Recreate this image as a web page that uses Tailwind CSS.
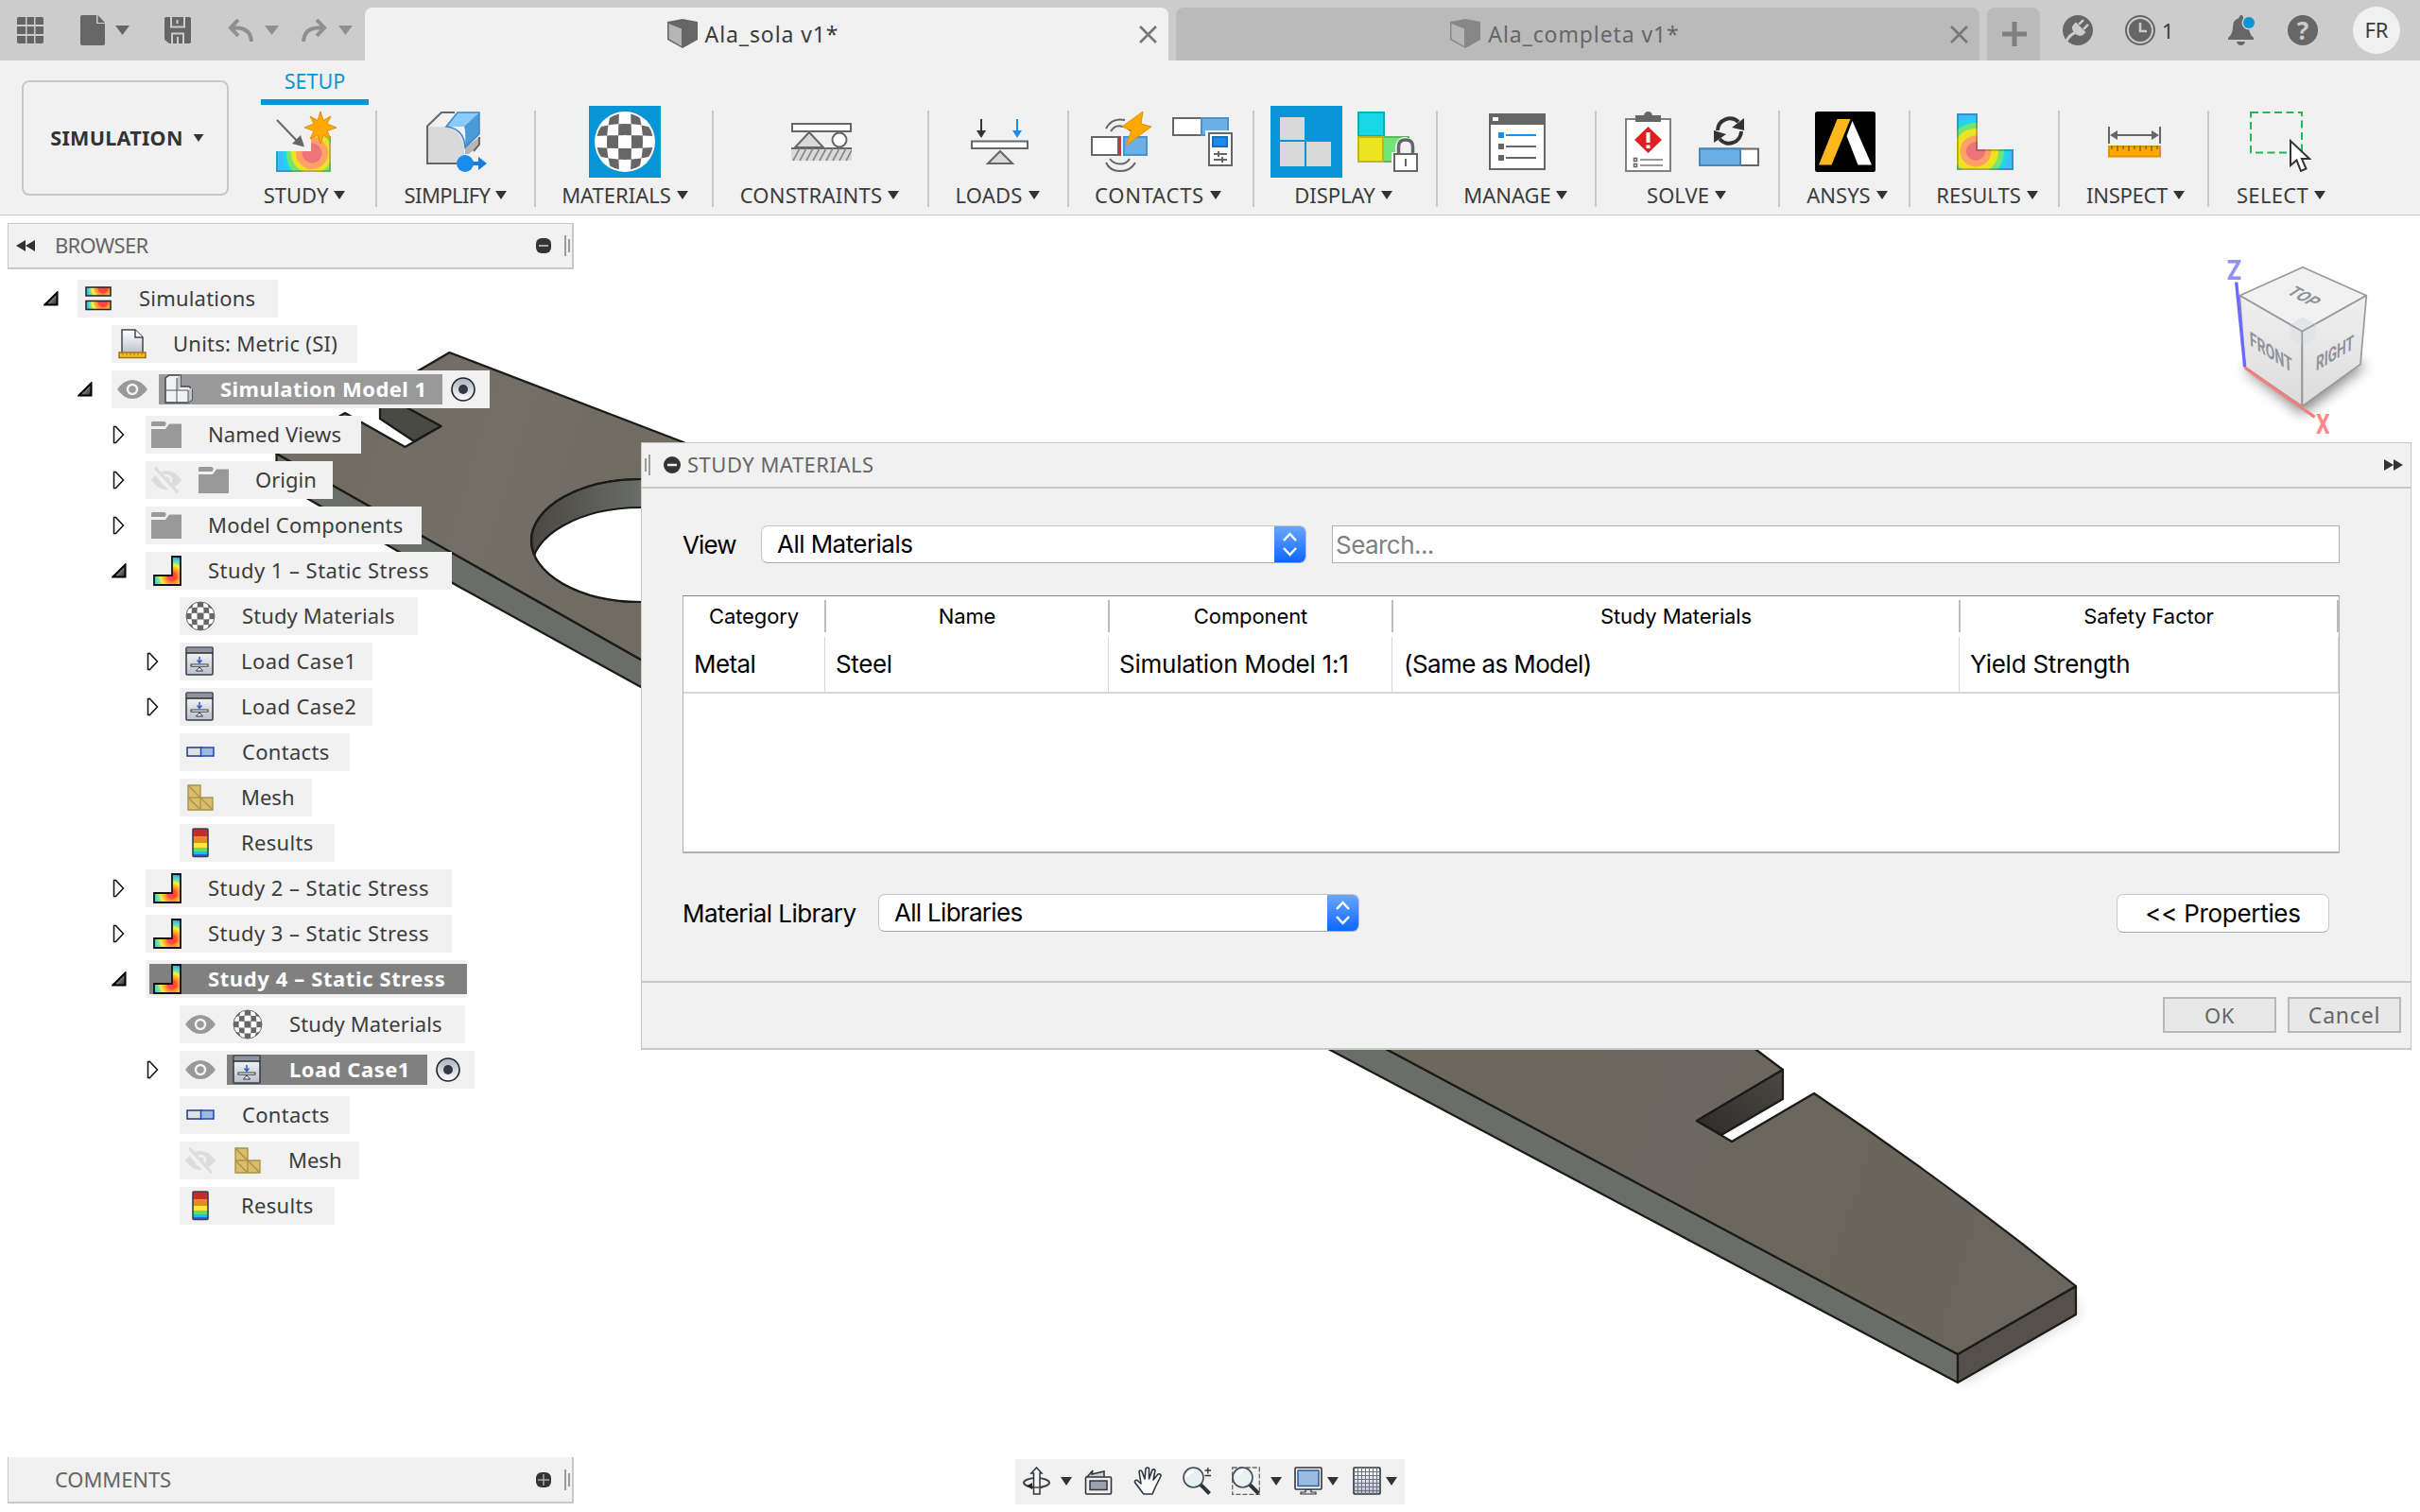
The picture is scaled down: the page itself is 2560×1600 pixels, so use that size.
<!DOCTYPE html>
<html lang="en">
<head>
<meta charset="utf-8">
<title>Ala_sola v1* - Simulation</title>
<script src="https://cdn.jsdelivr.net/npm/@tailwindcss/browser@4"></script>
</head>
<body class="w-[2560px] h-[1600px] overflow-hidden flex flex-col bg-white text-[22px] text-[#3c3c3c] leading-none whitespace-nowrap font-['Noto_Sans','Open_Sans',sans-serif]">

<!-- shared symbols -->
<svg class="absolute w-0 h-0">
  <defs>
    <linearGradient id="gTri" x1="1" y1="1" x2="0.2" y2="0.3"><stop offset="0" stop-color="#222"/><stop offset="1" stop-color="#bbb"/></linearGradient>
    <linearGradient id="gDoc" x1="0" y1="0" x2="0" y2="1"><stop offset="0" stop-color="#fff"/><stop offset="1" stop-color="#b9bfcc"/></linearGradient>
    <linearGradient id="gRad" x1="0" y1="0" x2="0" y2="1"><stop offset="0" stop-color="#a9b1c0"/><stop offset="1" stop-color="#fff"/></linearGradient>
    <linearGradient id="gB" x1="0" y1="0" x2="0" y2="1"><stop offset="0" stop-color="#6aa8fb"/><stop offset="1" stop-color="#0a66ff"/></linearGradient>
    <radialGradient id="gHeat" gradientUnits="userSpaceOnUse" cx="20" cy="22" r="23">
      <stop offset="0.2" stop-color="#ff4a3d"/><stop offset="0.28" stop-color="#ff8a2e"/><stop offset="0.42" stop-color="#ffc02e"/><stop offset="0.52" stop-color="#ffe94a"/><stop offset="0.65" stop-color="#7fe87a"/><stop offset="0.8" stop-color="#3fc8f5"/><stop offset="1" stop-color="#3a6fe0"/>
    </radialGradient>
    <radialGradient id="gHeatS" gradientUnits="userSpaceOnUse" cx="19" cy="2" r="20">
      <stop offset="0.25" stop-color="#ff4444"/><stop offset="0.3" stop-color="#ff8a2e"/><stop offset="0.45" stop-color="#ffb02e"/><stop offset="0.5" stop-color="#ffe94a"/><stop offset="0.6" stop-color="#ffe94a"/><stop offset="0.68" stop-color="#7fe87a"/><stop offset="0.8" stop-color="#3fc8f5"/><stop offset="1" stop-color="#3a8fe0"/>
    </radialGradient>
    <clipPath id="cBall"><circle r="30"/></clipPath>
  </defs>
  <symbol id="caret" viewBox="0 0 12 9"><path d="M0 0H12L6 9z" fill="#333"/></symbol>
  <symbol id="open" viewBox="0 0 16 16"><path d="M1.500 14.500H14.500V1.500z" fill="url(#gTri)" stroke="#000" stroke-width="2"/></symbol>
  <symbol id="closed" viewBox="0 0 16 20"><path d="M2.500 1.500H4.500L12.500 10L4.500 18.500H2.500z" fill="#fff" stroke="#111" stroke-width="1.500"/></symbol>
  <symbol id="eye" viewBox="0 0 32 22"><path d="M0 11Q7 1 16 1T32 11Q25 21 16 21T0 11z" fill="#999"/><circle cx="16" cy="11" r="5" fill="none" stroke="#f1f1f1" stroke-width="2.500"/></symbol>
  <symbol id="eyeoff" viewBox="0 0 32 28"><path d="M0 14Q7 4 16 4T32 14Q25 24 16 24T0 14z" fill="#dcdcdc"/><circle cx="16" cy="14" r="5" fill="none" stroke="#f1f1f1" stroke-width="2.500"/><path d="M1 0L26 28" stroke="#f1f1f1" stroke-width="7"/><path d="M4 1L28 27" stroke="#dcdcdc" stroke-width="3"/></symbol>
  <symbol id="folder" viewBox="0 0 32 28"><path d="M0 1.500Q0 0 1.500 0H14L16 2L14.500 5H0z" fill="#999"/><path d="M0 8H15L19 2.500H32V28H0z" fill="#999"/></symbol>
  <symbol id="study" viewBox="0 0 30 32"><path d="M1 21H20V1H29V31H1z" fill="url(#gHeat)" stroke="#111" stroke-width="1.800"/></symbol>
  <symbol id="ball" viewBox="-32 -32 64 64"><circle r="31" fill="#fff"/><path clip-path="url(#cBall)" fill="#666" fill-rule="evenodd" d="M-32 -32H32V32H-32z M-14 -32Q-24 0 -14 32H14Q24 0 14 -32z M-6 -32Q-8 0 -6 32H6Q8 0 6 -32z M-32 -14Q0 -24 32 -14V14Q0 24 -32 14z M-32 -6Q0 -8 32 -6V6Q0 8 -32 6z"/><circle r="30" fill="none" stroke="#666" stroke-width="2"/></symbol>
  <symbol id="load" viewBox="0 0 30 32"><rect x="1" y="1" width="28" height="29" rx="1" fill="url(#gDoc)" stroke="#3a3f48" stroke-width="1.600"/><rect x="2" y="2" width="26" height="4.500" fill="#8d95a3"/><path d="M1 7H29" stroke="#222" stroke-width="1.500"/><path d="M15 11V17M12.500 14.500L15 17.500L17.500 14.500" fill="none" stroke="#2f62c9" stroke-width="1.500"/><rect x="6" y="19" width="18" height="2.200" fill="#fff" stroke="#333"/><path d="M15 22L18.500 26H11.500z" fill="#fff" stroke="#333"/></symbol>
  <symbol id="contact" viewBox="0 0 30 12"><rect x="1" y="1" width="15" height="9" fill="#dfe1e6" stroke="#1d3a7a" stroke-width="1.500"/><rect x="15.500" y="1" width="13.500" height="9" fill="#9db9e2" stroke="#1f4bb5" stroke-width="1.500"/></symbol>
  <symbol id="mesh" viewBox="0 0 28 28"><path d="M1 1H14V14H27V27H1zM1 14H14V27M1 1L14 14L27 27M1 14L14 27" fill="#d9be6c" stroke="#ab924a" stroke-width="1.400"/></symbol>
  <symbol id="result" viewBox="0 0 18 32"><rect x="1" y="1" width="16" height="8.500" fill="#c82a2a"/><rect x="1" y="9.500" width="16" height="6.500" fill="#e58a20"/><rect x="1" y="16" width="16" height="5" fill="#ffe83a"/><rect x="1" y="21" width="16" height="4" fill="#5ee25e"/><rect x="1" y="25" width="16" height="3" fill="#00c8ff"/><rect x="1" y="28" width="16" height="2.500" fill="#2c62d0"/><rect x="1" y="1" width="16" height="29.500" rx="1" fill="none" stroke="#3a3f48" stroke-width="1.600"/></symbol>
  <symbol id="radio" viewBox="0 0 28 28"><circle cx="14" cy="14" r="12" fill="url(#gRad)" stroke="#222" stroke-width="1.600"/><circle cx="14" cy="14" r="5" fill="#333a44"/></symbol>
  <symbol id="cube" viewBox="0 0 32 32"><path d="M16 0L32 3V22L16 31L0 22V3z" fill="#666"/><path d="M1.500 5L15 10.500V29L1.500 21z" fill="#b5b5b5"/></symbol>
</svg>

<!-- title bar -->
<header class="h-16 flex items-end bg-[#ccc]">
  <div class="w-[386px] h-16 flex items-center pl-[18px]">
    <svg class="w-7 h-7" viewBox="0 0 28 28" fill="#666"><path d="M0 2Q0 0 2 0H9V8H0zM10.500 0H18V8H10.500zM19.500 0H26Q28 0 28 2V8H19.500zM0 10H9V18H0zM10.500 10H18V18H10.500zM19.500 10H28V18H19.500zM0 20H9V28H2Q0 28 0 26zM10.500 20H18V28H10.500zM19.500 20H28V26Q28 28 26 28H19.500z"/></svg>
    <svg class="ml-[39px] w-[26px] h-8" viewBox="0 0 26 32" fill="#666"><path d="M2 0H17V9H26V30Q26 32 24 32H2Q0 32 0 30V2Q0 0 2 0z"/><path d="M18.500 0L26 8H18.500z"/></svg>
    <svg class="ml-[11px] w-[15px] h-2.5" viewBox="0 0 15 10"><path d="M0 0H15L7.500 10z" fill="#666"/></svg>
    <svg class="ml-[37px] w-7 h-7" viewBox="0 0 28 28"><path d="M2 0H26Q28 0 28 2V26Q28 28 26 28H5L0 24V2Q0 0 2 0z" fill="#666"/><path d="M7 0V10.500H21V0M13.500 3V7M8 28V17.500H20V28M14 21V28" fill="none" stroke="#ccc" stroke-width="2"/></svg>
    <svg class="ml-[39px] w-[27px] h-6" viewBox="0 0 27 24" fill="none" stroke="#8f8f8f" stroke-width="4"><path d="M11 1L3 9.500L11 18M3 9.500H10Q24 10 25 24"/></svg>
    <svg class="ml-[12px] w-[15px] h-2.5" viewBox="0 0 15 10"><path d="M0 0H15L7.500 10z" fill="#8f8f8f"/></svg>
    <svg class="ml-[24px] w-[27px] h-6" viewBox="0 0 27 24" fill="none" stroke="#8f8f8f" stroke-width="4"><path d="M16 1L24 9.500L16 18M24 9.500H17Q3 10 2 24"/></svg>
    <svg class="ml-[12px] w-[15px] h-2.5" viewBox="0 0 15 10"><path d="M0 0H15L7.500 10z" fill="#8f8f8f"/></svg>
  </div>
  <div class="w-[850px] h-14 rounded-t-lg bg-[#f1f1f1] flex items-center pr-3">
    <div class="flex-1 flex items-center justify-center gap-[8px] pl-0.5 text-[23px] tracking-[0.9px]"><svg class="w-8 h-8"><use href="#cube"/></svg>Ala_sola v1*</div>
    <svg class="w-[19px] h-[19px]" viewBox="0 0 18 18"><path d="M1 1L17 17M17 1L1 17" stroke="#777" stroke-width="2.500"/></svg>
  </div>
  <div class="ml-2 w-[850px] h-14 rounded-t-lg bg-[#bababa] flex items-center pr-3 text-[#666]">
    <div class="flex-1 flex items-center justify-center gap-[8px] pl-1 text-[23px] tracking-[0.9px]"><svg class="w-8 h-8 opacity-60"><use href="#cube"/></svg>Ala_completa v1*</div>
    <svg class="w-[19px] h-[19px]" viewBox="0 0 18 18"><path d="M1 1L17 17M17 1L1 17" stroke="#777" stroke-width="2.500"/></svg>
  </div>
  <div class="ml-2 w-14 h-14 rounded-t-lg bg-[#bababa] flex items-center justify-center pl-0.5"><svg class="w-[26px] h-[26px]" viewBox="0 0 26 26"><path d="M13 0V26M0 13H26" stroke="#808080" stroke-width="5"/></svg></div>
  <div class="h-16 flex items-center pl-6">
    <svg class="w-8 h-8" viewBox="0 0 32 32"><circle cx="16" cy="16" r="16" fill="#666"/><g transform="rotate(45 16 16)" fill="none" stroke="#ccc"><path d="M12.500 4V11M19.500 4V11" stroke-width="2.500"/><path d="M8.500 11.500H23.500V14Q23.500 20.500 16 20.500T8.500 14z" fill="#ccc" stroke="none"/><path d="M16 20Q13 25 16 34" stroke-width="3"/></g></svg>
    <svg class="ml-[34px] w-8 h-8" viewBox="0 0 32 32"><circle cx="16" cy="16" r="15" fill="none" stroke="#666" stroke-width="2"/><circle cx="16" cy="16" r="12" fill="#666"/><path d="M16 8V17H23" fill="none" stroke="#ccc" stroke-width="2.500"/></svg>
    <span class="ml-[7px] w-5">1</span>
    <svg class="ml-[50px] w-[30px] h-8" viewBox="0 0 30 32"><path d="M14 0Q16 0 16 3Q22 5 22 13Q22 20 27 24V26H0V24Q5 20 5 13Q5 5 11.500 3Q12 0 14 0zM9 28H18Q17 32 13.500 32T9 28z" fill="#666"/><circle cx="22" cy="8" r="7.500" fill="#ccc"/><circle cx="22" cy="8" r="6" fill="#0696d7"/></svg>
    <div class="ml-[33px] size-8 rounded-full bg-[#666] text-[#ccc] font-bold text-[26px] flex items-center justify-center">?</div>
    <div class="ml-[37px] size-[50px] rounded-full bg-[#f0f0f0] flex items-center justify-center pb-0.5">FR</div>
  </div>
</header>

<!-- ribbon -->
<section class="h-[164px] bg-[#f1f1f1] border-b border-b-[#c8c8c8] flex items-start">
  <button class="ml-[23px] mt-[21px] w-[219px] h-[122px] rounded-lg border-2 border-[#c8c8c8] flex items-center justify-center gap-[10px] pl-1 font-bold text-[21.5px] tracking-[0.3px] text-[#333]">SIMULATION<svg class="w-3 h-2"><use href="#caret"/></svg></button>
  <div class="ml-[7px] w-[150px] h-[155px] flex flex-col items-center relative">
    <div class="ml-[18px] mt-2.5 w-[114px] h-[37px] pt-px flex justify-center border-b-[6px] border-b-[#0696d7] text-[#0696d7] text-[21.500px]">SETUP</div>
    <svg class="mt-[7px] w-16 h-16" viewBox="0 0 64 64"><clipPath id="cS"><path d="M0 42H37V26H58V64H0z"/></clipPath><g clip-path="url(#cS)"><rect width="64" height="64" fill="#3fbcff"/><ellipse cx="38" cy="44" rx="31" ry="34" fill="#1ed8ea"/><ellipse cx="38" cy="44" rx="27" ry="30" fill="#73e576"/><ellipse cx="38" cy="44" rx="22" ry="22" fill="#ece421"/><circle cx="38" cy="44" r="17" fill="#ffa166"/><circle cx="38" cy="44" r="10.500" fill="#ee7577"/></g><path d="M1 42.500V63H57V26" fill="none" stroke="#000" stroke-opacity=".2" stroke-width="2"/><path d="M1 9L24 33" stroke="#666" stroke-width="2"/><path d="M30 37.500L17 34L26 25z" fill="#666"/><path d="M47 0L50 9.500L58 5L54 13L64 17L54 20.500L58 29L50 25L47 34L44 25L36 29L40 20.500L30 17L40 13L36 5L44 9.500z" fill="#ffa800" stroke="#e09000"/></svg>
    <div class="mt-[13px] -ml-1 flex items-center gap-[6px]">STUDY<svg class="w-3 h-[9px]"><use href="#caret"/></svg></div>
    <i class="absolute right-0 top-[53px] h-[102px] w-0.5 bg-[#cacaca]"></i>
  </div>
  <div class="mt-[48px] flex">
    <div class="w-[168px] flex flex-col items-center relative">
      <div class="h-[76px] flex items-center gap-[10px]"><svg class="w-16 h-16" viewBox="0 0 64 64"><path d="M1 15.500L16 1H56V36L41 46V55H1z" fill="#f1f1f1"/><path d="M1 16H20Q38 20 40 38V55H1z" fill="#d9d9d9"/><path d="M56 27V36L45 45H41V38z" fill="#b5b5b5"/><path d="M30 1H16L1 15.500V55H32M56 27V35L50 42" fill="none" stroke="#666" stroke-width="2"/><path d="M33 1H56L42 16H21z" fill="#8acbff"/><path d="M56 1V24L41 38Q42 20 40 16z" fill="#4a9ad8"/><path d="M33 1H56V24L41 38Q40 18 21 16z" fill="none" stroke="#3a88c8" stroke-width="1.500"/><circle cx="41" cy="55" r="9" fill="#1a8ceb"/><path d="M49 53H55V48L64 55L55 62V57H49z" fill="#1a7ddb"/></svg></div>
      <div class="mt-[7px] -ml-0.5 flex items-center gap-[6px] tracking-[-0.6px]">SIMPLIFY<svg class="w-3 h-[9px]"><use href="#caret"/></svg></div><i class="absolute right-0 top-[5px] h-[102px] w-0.5 bg-[#cacaca]"></i>
    </div>
    <div class="w-[188px] flex flex-col items-center relative">
      <div class="h-[76px] w-[76px] bg-[#0696d7] flex items-center justify-center"><svg class="w-16 h-16" viewBox="-32 -32 64 64"><circle r="32" fill="#fff"/><path clip-path="url(#cBall)" fill="#666" fill-rule="evenodd" d="M-14 -32Q-24 0 -14 32H14Q24 0 14 -32z M-6 -32Q-8 0 -6 32H6Q8 0 6 -32z M-32 -14Q0 -24 32 -14V14Q0 24 -32 14z M-32 -6Q0 -8 32 -6V6Q0 8 -32 6z"/></svg></div>
      <div class="mt-[7px] flex items-center gap-[6px]">MATERIALS<svg class="w-3 h-[9px]"><use href="#caret"/></svg></div><i class="absolute right-0 top-[5px] h-[102px] w-0.5 bg-[#cacaca]"></i>
    </div>
    <div class="w-[228px] flex flex-col items-center relative">
      <div class="h-[76px] flex items-center"><svg class="w-16 h-16" viewBox="0 0 64 64" stroke="#666" stroke-width="2"><rect x="1" y="13" width="62" height="8" fill="#fff"/><path d="M19 22L34 38H4z" fill="#d9d9d9"/><circle cx="51" cy="30" r="7.500" fill="#fff"/><rect x="0" y="38" width="64" height="14" fill="#d9d9d9" stroke="none"/><path d="M0 39H64"/><path d="M2 52L9 39M9 52L16 39M16 52L23 39M23 52L30 39M30 52L37 39M37 52L44 39M44 52L51 39M51 52L58 39M58 52L64 41" stroke-width="1.600" stroke="#888"/></svg></div>
      <div class="mt-[7px] -ml-1 flex items-center gap-[6px] tracking-[0.25px]">CONSTRAINTS<svg class="w-3 h-[9px]"><use href="#caret"/></svg></div><i class="absolute right-0 top-[5px] h-[102px] w-0.5 bg-[#cacaca]"></i>
    </div>
    <div class="w-[148px] flex flex-col items-center relative">
      <div class="h-[76px] flex items-center"><svg class="w-16 h-16" viewBox="0 0 64 64"><path d="M13 8V22" stroke="#333" stroke-width="2"/><path d="M8 20H18L13 28z" fill="#333"/><path d="M51 8V22" stroke="#1a8ceb" stroke-width="2"/><path d="M46 20H56L51 28z" fill="#1a8ceb"/><rect x="3" y="31.500" width="59" height="7.500" fill="#fff" stroke="#666" stroke-width="2"/><path d="M33 42L46 55H20z" fill="#d9d9d9" stroke="#666" stroke-width="2"/></svg></div>
      <div class="mt-[7px] -ml-1 flex items-center gap-[6px] tracking-[0.2px]">LOADS<svg class="w-3 h-[9px]"><use href="#caret"/></svg></div><i class="absolute right-0 top-[5px] h-[102px] w-0.5 bg-[#cacaca]"></i>
    </div>
    <div class="w-[196px] flex flex-col items-center relative">
      <div class="h-[76px] flex items-center gap-[22px]">
        <svg class="w-16 h-16" viewBox="0 0 64 64"><path d="M16 18Q22 6 36 9M21 21Q26 13 34 16M16 54Q20 63 31 63T47 54M20 50Q24 55.500 31 55.500T41 50M38 17L43 21" fill="none" stroke="#666" stroke-width="2"/><rect x="1" y="27" width="28" height="19" fill="#fff" stroke="#666" stroke-width="2"/><path d="M31 26V47" stroke="#c82020" stroke-width="1.800"/><rect x="35" y="27" width="24" height="19" fill="#6ab0e6" stroke="#4a92cc" stroke-width="2"/><path d="M55 0L33 16L43 20L37 36L64 16L53 13z" fill="#ffa800" stroke="#e09000"/></svg>
        <svg class="w-16 h-16" viewBox="0 0 64 64"><rect x="1" y="7" width="30" height="18" fill="#fff" stroke="#666" stroke-width="2"/><rect x="31" y="7" width="28" height="18" fill="#6ab0e6" stroke="#4a92cc" stroke-width="2"/><rect x="35" y="20" width="29" height="40" fill="#f1f1f1"/><rect x="39" y="23" width="24" height="34" fill="#fff" stroke="#666" stroke-width="2"/><rect x="43" y="27" width="15" height="10" fill="#1a8ceb" stroke="#1470c0" stroke-width="2"/><path d="M44 45H58M44 51H58M49 42V48M53 48V54" stroke="#666" stroke-width="2"/></svg>
      </div>
      <div class="mt-[7px] -ml-2 flex items-center gap-[6px] tracking-[0.75px]">CONTACTS<svg class="w-3 h-[9px]"><use href="#caret"/></svg></div><i class="absolute right-0 top-[5px] h-[102px] w-0.5 bg-[#cacaca]"></i>
    </div>
    <div class="w-[194px] flex flex-col items-center relative">
      <div class="h-[76px] flex items-center gap-4 pr-1">
        <div class="h-[76px] w-[76px] bg-[#0696d7] flex items-center justify-center"><svg class="w-16 h-16" viewBox="0 0 64 64"><path d="M4 6H30V30H4zM4 32H30V58H4zM32 32H58V58H32z" fill="#d9d9d9"/></svg></div>
        <svg class="w-16 h-16" viewBox="0 0 64 64"><rect x="1" y="1" width="27" height="25" fill="#18d5e8" stroke="#12aab9" stroke-width="2"/><rect x="28" y="27" width="26" height="26" fill="#73e576"/><path d="M27 27H55M27 53H38" stroke="#5cb85e" stroke-width="2"/><rect x="1" y="27" width="26" height="26" fill="#ece421" stroke="#bdb61a" stroke-width="2"/><path d="M36 43H40V36Q43 26 51 27T62 43V64H36z" fill="#f1f1f1"/><path d="M43.500 44V37Q43.500 30 51 30T58.500 37V44" fill="none" stroke="#666" stroke-width="3.500"/><rect x="39" y="45" width="24" height="18" fill="#fff" stroke="#666" stroke-width="2"/><path d="M51 50V58" stroke="#666" stroke-width="2"/></svg>
      </div>
      <div class="mt-[7px] -ml-1.5 flex items-center gap-[6px]">DISPLAY<svg class="w-3 h-[9px]"><use href="#caret"/></svg></div><i class="absolute right-0 top-[5px] h-[102px] w-0.5 bg-[#cacaca]"></i>
    </div>
    <div class="w-[168px] flex flex-col items-center relative">
      <div class="h-[76px] flex items-center"><svg class="w-16 h-16" viewBox="0 0 64 64"><rect x="3" y="3" width="58" height="58" fill="#fff" stroke="#666" stroke-width="2"/><rect x="2" y="2" width="60" height="12" fill="#666"/><rect x="6" y="6" width="6" height="4" fill="#fff"/><path d="M12 22H18V28H12z" fill="#1a8ceb"/><path d="M20 25H52" stroke="#1a8ceb" stroke-width="2"/><path d="M12 34H18V40H12zM12 46H18V52H12z" fill="#666"/><path d="M20 37H52M20 49H52" stroke="#666" stroke-width="2"/></svg></div>
      <div class="mt-[7px] -ml-1 flex items-center gap-[5px]">MANAGE<svg class="w-3 h-[9px]"><use href="#caret"/></svg></div><i class="absolute right-0 top-[5px] h-[102px] w-0.5 bg-[#cacaca]"></i>
    </div>
    <div class="w-[194px] flex flex-col items-center relative">
      <div class="h-[76px] flex items-center gap-[22px]">
        <svg class="w-16 h-16" viewBox="0 0 64 64"><rect x="9" y="8" width="47" height="55" fill="#fff" stroke="#808080" stroke-width="2"/><path d="M19 4H28Q29 0 32.500 0T37 4H46V11H19z" fill="#666"/><path d="M32.500 16L47 30L32.500 44L18 30z" fill="#e02020"/><path d="M32.500 22V33M32.500 35.500V39" stroke="#fff" stroke-width="4"/><path d="M17.500 49.500H20.500V52.500H17.500zM17.500 55.500H20.500V58.500H17.500z" fill="none" stroke="#666" stroke-width="1.500"/><path d="M24 51H48M24 57H48" stroke="#999" stroke-width="1.800"/></svg>
        <svg class="w-16 h-16" viewBox="0 0 64 64"><path d="M20 20A13 13 0 0 1 42 11M45 21A13 13 0 0 1 22 29" fill="none" stroke="#333" stroke-width="4"/><path d="M48 7V20L35 17zM16 33V20L29 24z" fill="#333"/><rect x="1" y="39.500" width="62" height="17.500" fill="#fff" stroke="#666" stroke-width="2"/><rect x="1" y="39.500" width="43" height="17.500" fill="#6ab0e6" stroke="#4a85b8" stroke-width="2"/></svg>
      </div>
      <div class="mt-[7px] -ml-1 flex items-center gap-[6px]">SOLVE<svg class="w-3 h-[9px]"><use href="#caret"/></svg></div><i class="absolute right-0 top-[5px] h-[102px] w-0.5 bg-[#cacaca]"></i>
    </div>
    <div class="w-[138px] flex flex-col items-center relative">
      <div class="h-[76px] flex items-center"><svg class="w-16 h-16" viewBox="0 0 64 64"><rect width="64" height="64" rx="2.500" fill="#000"/><path d="M23.500 8H37.500L17.500 56.500H4z" fill="#ffb71b"/><path d="M39.500 10L60 56.500H45.500L33.500 26z" fill="#fff"/></svg></div>
      <div class="mt-[7px] ml-1 flex items-center gap-[6px]">ANSYS<svg class="w-3 h-[9px]"><use href="#caret"/></svg></div><i class="absolute right-0 top-[5px] h-[102px] w-0.5 bg-[#cacaca]"></i>
    </div>
    <div class="w-[158px] flex flex-col items-center relative">
      <div class="h-[76px] flex items-center"><svg class="w-16 h-16" viewBox="0 0 64 64"><clipPath id="cR"><path d="M2 2H24V40H62V62H2z"/></clipPath><g clip-path="url(#cR)"><rect width="64" height="64" fill="#3fbcff"/><circle cx="22" cy="42" r="35" fill="#1ed8ea"/><circle cx="22" cy="42" r="30" fill="#73e576"/><circle cx="22" cy="42" r="24" fill="#ece421"/><circle cx="22" cy="42" r="16.500" fill="#ffa166"/><circle cx="22" cy="42" r="10" fill="#ee7577"/></g><path d="M3 3H23V41H61V61H3z" fill="none" stroke="#000" stroke-opacity=".22" stroke-width="2"/></svg></div>
      <div class="mt-[7px] ml-1 flex items-center gap-[6px]">RESULTS<svg class="w-3 h-[9px]"><use href="#caret"/></svg></div><i class="absolute right-0 top-[5px] h-[102px] w-0.5 bg-[#cacaca]"></i>
    </div>
    <div class="w-[158px] flex flex-col items-center relative">
      <div class="h-[76px] flex items-center"><svg class="w-16 h-16" viewBox="0 0 64 64"><path d="M5 16V34M59 16V34M10 25H54" stroke="#666" stroke-width="2"/><path d="M6 25L14 20V30zM58 25L50 20V30z" fill="#666"/><rect x="5" y="37" width="54" height="10.500" fill="#ffa800" stroke="#e09000" stroke-width="2"/><path d="M8 36V40M14 36V42M20 36V40M26 36V42M32 36V40M38 36V42M44 36V40M50 36V42M56 36V40" stroke="#8a6a20" stroke-width="1.500"/></svg></div>
      <div class="mt-[7px] ml-0.5 flex items-center gap-[6px] tracking-[-0.3px]">INSPECT<svg class="w-3 h-[9px]"><use href="#caret"/></svg></div><i class="absolute right-0 top-[5px] h-[102px] w-0.5 bg-[#cacaca]"></i>
    </div>
    <div class="w-[150px] flex flex-col items-center">
      <div class="h-[76px] flex items-center"><svg class="w-16 h-16 overflow-visible" viewBox="0 0 64 64"><rect x="1" y="1" width="54" height="42.500" fill="none" stroke="#1db954" stroke-width="2" stroke-dasharray="8 4.500"/><path d="M43 31V57L49.500 51.500L54 63L59.500 60.500L55 50H63z" fill="#fff" stroke="#333" stroke-width="2"/></svg></div>
      <div class="mt-[7px] ml-0.5 flex items-center gap-[6px] tracking-[0.3px]">SELECT<svg class="w-3 h-[9px]"><use href="#caret"/></svg></div>
    </div>
  </div>
</section>

<!-- canvas -->
<main class="relative flex-1 bg-[#fefefe] overflow-hidden">
  <!-- plate model; coordinates are those of the window -->
  <svg class="absolute left-0 top-0 w-[2560px] h-[1372px]" viewBox="0 228 2560 1372">
    <defs>
      <linearGradient id="gTop" gradientUnits="userSpaceOnUse" x1="300" y1="400" x2="2200" y2="1000"><stop offset="0" stop-color="#76706a"/><stop offset=".04" stop-color="#716d61"/><stop offset=".12" stop-color="#736e67"/><stop offset=".2" stop-color="#716c61"/><stop offset=".75" stop-color="#6c675c"/><stop offset=".83" stop-color="#6c6761"/><stop offset=".9" stop-color="#6a665a"/><stop offset="1" stop-color="#6a655d"/></linearGradient>
      <linearGradient id="gWall" x1="0" y1="1" x2="1" y2="0"><stop offset="0" stop-color="#2d2c29"/><stop offset="1" stop-color="#4b4943"/></linearGradient>
      <linearGradient id="gHole" x1="0" y1="0" x2="1" y2="0"><stop offset="0" stop-color="#4a4742"/><stop offset=".5" stop-color="#6a6d68"/></linearGradient>
      <filter id="soft" x="-20%" y="-20%" width="140%" height="140%"><feGaussianBlur stdDeviation="6"/></filter>
      <clipPath id="cHole"><ellipse cx="678" cy="572" rx="116" ry="65"/></clipPath>
    </defs>
    <path d="M2074 1466L2200 1394L2196 1370L2070 1440z" fill="#000" opacity=".12" filter="url(#soft)"/>
    <g stroke="#1a1a18" stroke-width="2.200" stroke-linejoin="round">
      <path d="M292.500 480L678 698L1468 1111L2071 1433V1463L1407 1111L678 727L484 620L326 528L292.500 508z" fill="#6a6d68"/>
      <path d="M2071 1433L2196 1361V1391L2071 1463z" fill="#55514a"/>
      <path d="M292.500 480L365 437L428.500 473L466.500 451L402 416L475.500 373L723 468L1858 1111L1886 1132L1795 1186L1832 1208L1919 1157Q2062 1253 2196 1361L2071 1433L1468 1111L678 698z" fill="url(#gTop)"/>
      <path d="M402 416L466.500 451L438 467L402 443z" fill="#4a4a45"/>
      <path d="M1886 1132V1163L1821 1201L1795 1186z" fill="url(#gWall)"/>
      <ellipse cx="678" cy="572" rx="116" ry="65" fill="url(#gHole)"/>
      <g clip-path="url(#cHole)"><ellipse cx="678" cy="602" rx="116" ry="65" fill="#fefefe"/></g>
      <ellipse cx="678" cy="572" rx="116" ry="65" fill="none"/>
    </g>
  </svg>

  <!-- view cube -->
  <svg class="absolute left-[2260px] top-[2px] w-[300px] h-[240px]" viewBox="0 0 900 720">
    <defs>
      <filter id="sh" x="-30%" y="-30%" width="160%" height="160%"><feGaussianBlur stdDeviation="20"/></filter>
      <linearGradient id="gF" x1="0" y1="0" x2="0" y2="1"><stop offset="0" stop-color="#f0f0f0"/><stop offset="1" stop-color="#dcdcdc"/></linearGradient>
    </defs>
    <path d="M340 480L526 400L730 470L526 625z" fill="#000" opacity=".45" filter="url(#sh)"/>
    <g stroke="#999" stroke-width="5" stroke-linejoin="round">
      <path d="M328 248L528 158L730 248L526 362z" fill="#f1f1f1"/>
      <path d="M328 248L526 362V600L345 475z" fill="url(#gF)"/>
      <path d="M730 248L526 362V600L711 466z" fill="url(#gF)"/>
    </g>
    <path d="M528 316L570 340V385L528 410L487 385V340z" fill="#dfe1e6" opacity=".8"/>
    <path d="M526 362V600" stroke="#999" stroke-width="5"/><path d="M487 340L526 362L566 340" fill="none" stroke="#999" stroke-width="5"/>
    <g fill="#8f9399" font-family="Roboto, 'Noto Sans', sans-serif" font-weight="700" font-size="64">
      <text transform="matrix(.62 .33 -.75 .5 474 240)" textLength="135" lengthAdjust="spacingAndGlyphs">TOP</text>
      <text transform="matrix(.85 .56 .05 1 361 406)" textLength="158" lengthAdjust="spacingAndGlyphs">FRONT</text>
      <text transform="matrix(.85 -.5 -.03 1 569 488)" textLength="142" lengthAdjust="spacingAndGlyphs">RIGHT</text>
    </g>
    <path d="M317 206L344 475" stroke="#6a6aff" stroke-width="10"/>
    <path d="M344 477L566 634" stroke="#f08080" stroke-width="10"/>
    <g font-family="Roboto, 'Noto Sans', sans-serif" font-weight="700"><text x="287" y="197" font-size="90" fill="#9090ff" textLength="46" lengthAdjust="spacingAndGlyphs">Z</text><text x="570" y="688" font-size="90" fill="#ff8a8a" textLength="44" lengthAdjust="spacingAndGlyphs">X</text></g>
  </svg>

  <!-- browser tree -->
  <aside class="absolute left-0 top-2 w-[620px]">
    <div class="ml-2 w-[599px] h-[49px] bg-[#f1f1f1] border border-[#c8c8c8] border-r-2 border-b-2 flex items-center text-[#666] tracking-[-0.7px]">
      <svg class="ml-[8px] w-5 h-[12px]" viewBox="0 0 20 12"><path d="M10 0V12L0 6zM20 0V12L10 6z" fill="#333"/></svg>
      <span class="ml-[21px] pb-0.5 flex-1">BROWSER</span>
      <svg class="mr-[14px] size-4" viewBox="0 0 16 16"><rect width="16" height="16" rx="6" fill="#333"/><path d="M3 8H13" stroke="#aaa" stroke-width="2"/></svg>
      <svg class="w-[7px] h-[22px] mr-px" viewBox="0 0 7 22"><path d="M1 0V22M5 4V18" stroke="#808080" stroke-width="1.500"/></svg>
    </div>
    <ul class="pt-[7px] [&_span]:pb-0.5">
      <li class="h-12 flex items-center pl-[46px]"><svg class="size-4 mr-5"><use href="#open"/></svg><div class="w-[212px] h-10 bg-[#f1f1f1] flex items-center"><div class="w-[65px] flex"><div class="w-11 flex justify-center"><svg class="w-7 h-[26px]" viewBox="0 0 28 26"><g fill="url(#gHeatS)" stroke="#222" stroke-width="1.500"><path d="M1 1H27V10H1z"/><path d="M1 1H27V10H1z" transform="translate(0 14.500)"/></g></svg></div></div><span class="tracking-[0.200px]">Simulations</span></div></li>
      <li class="h-12 flex items-center pl-[118px]"><div class="w-[260px] h-10 bg-[#f1f1f1] flex items-center"><div class="w-[65px] flex"><div class="w-11 flex justify-center"><svg class="w-[30px] h-8" viewBox="0 0 30 32"><path d="M4 1H18L26 9V27H4z" fill="url(#gDoc)" stroke="#444" stroke-width="1.500"/><path d="M18 1V9H26" fill="#fff" stroke="#444" stroke-width="1.500"/><rect x="1" y="25" width="28" height="5.500" fill="#f0c030" stroke="#a87010" stroke-width="1.500"/><path d="M5 25V28M9 25V28M13 25V28M17 25V28M21 25V28M25 25V28" stroke="#a87010"/></svg></div></div><span class="tracking-[0.25px]">Units: Metric (SI)</span></div></li>
      <li class="h-12 flex items-center pl-[82px]"><svg class="size-4 mr-5"><use href="#open"/></svg><div class="w-[400px] h-10 bg-[#f1f1f1] flex items-center"><div class="w-[50px] flex"><div class="w-11 flex justify-center"><svg class="w-8 h-[22px]"><use href="#eye"/></svg></div></div><div class="w-[300px] h-8 bg-[#999] text-white font-bold flex items-center"><div class="w-[65px] flex"><div class="w-[42px] flex justify-center"><svg class="w-[30px] h-8" viewBox="0 0 30 32"><path d="M1 4L5 1H17V13H26L29 16V27L25 30H1z" fill="#f2f3f6" stroke="#444" stroke-width="1.500"/><path d="M13 4L17 1V14L13 17zM25 17L29 14V27L25 30z" fill="#c0c4cc"/><path d="M1 17H25V30M13 4V30" fill="none" stroke="#555"/></svg></div></div><span class="tracking-[0.450px]">Simulation Model 1</span></div><div class="w-11 flex justify-center"><svg class="size-7"><use href="#radio"/></svg></div></div></li>
      <li class="h-12 flex items-center pl-[118px]"><svg class="w-4 h-5 mr-5"><use href="#closed"/></svg><div class="w-[228px] h-10 bg-[#f1f1f1] flex items-center"><div class="w-[66px] flex"><div class="w-11 flex justify-center"><svg class="w-8 h-7"><use href="#folder"/></svg></div></div><span class="tracking-[0.1px]">Named Views</span></div></li>
      <li class="h-12 flex items-center pl-[118px]"><svg class="w-4 h-5 mr-5"><use href="#closed"/></svg><div class="w-[198px] h-10 bg-[#f1f1f1] flex items-center"><div class="w-[50px] flex"><div class="w-11 flex justify-center"><svg class="w-8 h-7"><use href="#eyeoff"/></svg></div></div><div class="w-[66px] flex"><div class="w-11 flex justify-center"><svg class="w-8 h-7"><use href="#folder"/></svg></div></div><span>Origin</span></div></li>
      <li class="h-12 flex items-center pl-[118px]"><svg class="w-4 h-5 mr-5"><use href="#closed"/></svg><div class="w-[292px] h-10 bg-[#f1f1f1] flex items-center"><div class="w-[66px] flex"><div class="w-11 flex justify-center"><svg class="w-8 h-7"><use href="#folder"/></svg></div></div><span class="tracking-[0.2px]">Model Components</span></div></li>
      <li class="h-12 flex items-center pl-[118px]"><svg class="size-4 mr-5"><use href="#open"/></svg><div class="w-[324px] h-10 bg-[#f1f1f1] flex items-center"><div class="w-[66px] flex"><div class="w-[46px] flex justify-center"><svg class="w-[30px] h-8"><use href="#study"/></svg></div></div><span class="tracking-[0.45px]">Study 1 – Static Stress</span></div></li>
      <li class="h-12 flex items-center pl-[190px]"><div class="w-[252px] h-10 bg-[#f1f1f1] flex items-center"><div class="w-[66px] flex"><div class="w-11 flex justify-center"><svg class="size-8"><use href="#ball"/></svg></div></div><span class="tracking-[0.100px]">Study Materials</span></div></li>
      <li class="h-12 flex items-center pl-[154px]"><svg class="w-4 h-5 mr-5"><use href="#closed"/></svg><div class="w-[204px] h-10 bg-[#f1f1f1] flex items-center"><div class="w-[65px] flex"><div class="w-[42px] flex justify-center"><svg class="w-[30px] h-8"><use href="#load"/></svg></div></div><span class="tracking-[0.4px]">Load Case1</span></div></li>
      <li class="h-12 flex items-center pl-[154px]"><svg class="w-4 h-5 mr-5"><use href="#closed"/></svg><div class="w-[204px] h-10 bg-[#f1f1f1] flex items-center"><div class="w-[65px] flex"><div class="w-[42px] flex justify-center"><svg class="w-[30px] h-8"><use href="#load"/></svg></div></div><span class="tracking-[0.4px]">Load Case2</span></div></li>
      <li class="h-12 flex items-center pl-[190px]"><div class="w-[180px] h-10 bg-[#f1f1f1] flex items-center"><div class="w-[66px] flex"><div class="w-[43px] flex justify-center"><svg class="w-[30px] h-3"><use href="#contact"/></svg></div></div><span class="tracking-[0.300px]">Contacts</span></div></li>
      <li class="h-12 flex items-center pl-[190px]"><div class="w-[140px] h-10 bg-[#f1f1f1] flex items-center"><div class="w-[65px] flex"><div class="w-11 flex justify-center"><svg class="size-7"><use href="#mesh"/></svg></div></div><span>Mesh</span></div></li>
      <li class="h-12 flex items-center pl-[190px]"><div class="w-[164px] h-10 bg-[#f1f1f1] flex items-center"><div class="w-[65px] flex"><div class="w-[43px] flex justify-center"><svg class="w-[18px] h-8"><use href="#result"/></svg></div></div><span class="tracking-[0.300px]">Results</span></div></li>
      <li class="h-12 flex items-center pl-[118px]"><svg class="w-4 h-5 mr-5"><use href="#closed"/></svg><div class="w-[324px] h-10 bg-[#f1f1f1] flex items-center"><div class="w-[66px] flex"><div class="w-[46px] flex justify-center"><svg class="w-[30px] h-8"><use href="#study"/></svg></div></div><span class="tracking-[0.45px]">Study 2 – Static Stress</span></div></li>
      <li class="h-12 flex items-center pl-[118px]"><svg class="w-4 h-5 mr-5"><use href="#closed"/></svg><div class="w-[324px] h-10 bg-[#f1f1f1] flex items-center"><div class="w-[66px] flex"><div class="w-[46px] flex justify-center"><svg class="w-[30px] h-8"><use href="#study"/></svg></div></div><span class="tracking-[0.45px]">Study 3 – Static Stress</span></div></li>
      <li class="h-12 flex items-center pl-[118px]"><svg class="size-4 mr-5"><use href="#open"/></svg><div class="w-[340px] h-10 bg-[#f1f1f1] flex items-center pl-1"><div class="w-[336px] h-8 bg-[#808080] text-white font-bold flex items-center"><div class="w-[62px] flex"><div class="w-[38px] flex justify-center"><svg class="w-[30px] h-8"><use href="#study"/></svg></div></div><span class="tracking-[0.6px]">Study 4 – Static Stress</span></div></div></li>
      <li class="h-12 flex items-center pl-[190px]"><div class="w-[302px] h-10 bg-[#f1f1f1] flex items-center"><div class="w-[50px] flex"><div class="w-11 flex justify-center"><svg class="w-8 h-[22px]"><use href="#eye"/></svg></div></div><div class="w-[66px] flex"><div class="w-11 flex justify-center"><svg class="size-8"><use href="#ball"/></svg></div></div><span class="tracking-[0.100px]">Study Materials</span></div></li>
      <li class="h-12 flex items-center pl-[154px]"><svg class="w-4 h-5 mr-5"><use href="#closed"/></svg><div class="w-[312px] h-10 bg-[#f1f1f1] flex items-center"><div class="w-[50px] flex"><div class="w-11 flex justify-center"><svg class="w-8 h-[22px]"><use href="#eye"/></svg></div></div><div class="w-[212px] h-8 bg-[#808080] text-white font-bold flex items-center"><div class="w-[66px] flex"><div class="w-[42px] flex justify-center"><svg class="w-[30px] h-8"><use href="#load"/></svg></div></div><span class="tracking-[0.5px]">Load Case1</span></div><div class="w-11 flex justify-center"><svg class="size-7"><use href="#radio"/></svg></div></div></li>
      <li class="h-12 flex items-center pl-[190px]"><div class="w-[180px] h-10 bg-[#f1f1f1] flex items-center"><div class="w-[66px] flex"><div class="w-[43px] flex justify-center"><svg class="w-[30px] h-3"><use href="#contact"/></svg></div></div><span class="tracking-[0.300px]">Contacts</span></div></li>
      <li class="h-12 flex items-center pl-[190px]"><div class="w-[190px] h-10 bg-[#f1f1f1] flex items-center"><div class="w-[50px] flex"><div class="w-11 flex justify-center"><svg class="w-8 h-7"><use href="#eyeoff"/></svg></div></div><div class="w-[65px] flex"><div class="w-11 flex justify-center"><svg class="size-7"><use href="#mesh"/></svg></div></div><span>Mesh</span></div></li>
      <li class="h-12 flex items-center pl-[190px]"><div class="w-[164px] h-10 bg-[#f1f1f1] flex items-center"><div class="w-[65px] flex"><div class="w-[43px] flex justify-center"><svg class="w-[18px] h-8"><use href="#result"/></svg></div></div><span class="tracking-[0.300px]">Results</span></div></li>
    </ul>
  </aside>

  <!-- comments bar -->
  <div class="absolute left-2 top-[1314px] w-[599px] h-[49px] bg-[#f1f1f1] border-l border-r-2 border-b-2 border-[#c8c8c8] flex items-center text-[#666]">
    <span class="ml-[49px] pb-0.5 flex-1 tracking-[-0.100px]">COMMENTS</span>
    <svg class="mr-[14px] size-4" viewBox="0 0 16 16"><rect width="16" height="16" rx="6" fill="#333"/><path d="M2 8H14M8 2V14" stroke="#aaa" stroke-width="1.500"/></svg>
    <svg class="w-[7px] h-[22px] mr-px" viewBox="0 0 7 22"><path d="M1 0V22M5 4V18" stroke="#808080" stroke-width="1.500"/></svg>
  </div>

  <!-- navigation bar -->
  <nav class="absolute left-[1074px] top-[1316px] w-[412px] h-12 bg-[#f1f1f1] flex items-center pl-2 pb-0.5">
    <svg class="size-[30px]" viewBox="0 0 30 30"><ellipse cx="14.500" cy="17" rx="13.500" ry="5" fill="none" stroke="#3c4450" stroke-width="2"/><path d="M14.500 1L20 7H18V29H11.500V7H9z" fill="#f4f5f8" stroke="#333" stroke-width="1.500"/><path d="M8 22H21" stroke="#3c4450" stroke-width="1.500"/><path d="M4 20.500L10 17V24z" fill="#222"/></svg>
    <svg class="ml-2.5 w-3 h-[9px]"><use href="#caret"/></svg>
    <svg class="ml-[13px] size-[30px]" viewBox="0 0 30 30"><path d="M2 12L9 4L8 8L21 5V12" fill="#c9ccd4" stroke="#333" stroke-width="1.500"/><rect x="1.500" y="11" width="27" height="18" rx="1" fill="#f0f1f4" stroke="#333" stroke-width="1.600"/><rect x="6" y="15" width="18" height="9.500" fill="#9aa1b0" stroke="#333" stroke-width="1.500"/></svg>
    <svg class="ml-[22px] size-[30px]" viewBox="0 0 30 30"><path d="M10 28L1.500 16.500Q1 14 4 14.500L8 18L6 5Q7 3 9 5L12 13L13 2Q15 0 16.500 2V13L20 3.500Q22 2 23 4L21 14L26 8Q29 7 29 10L23 22L20 29H11z" fill="#fafafa" stroke="#2e3440" stroke-width="1.600" stroke-linejoin="round"/></svg>
    <svg class="ml-[22px] size-[30px]" viewBox="0 0 30 30"><path d="M19 19L28.500 28.500" stroke="#2e3440" stroke-width="4"/><circle cx="11.500" cy="11.500" r="10.500" fill="#e8f0f0" stroke="#444c58" stroke-width="1.600"/><path d="M5 10Q7 5 12 5" fill="none" stroke="#fff" stroke-width="3"/><path d="M23.500 4H30M26.800 1V7.500M23.500 9.500H30" stroke="#333" stroke-width="1.300"/></svg>
    <svg class="ml-[22px] size-[30px]" viewBox="0 0 30 30"><rect x=".7" y="1" width="28.600" height="28.500" fill="none" stroke="#666" stroke-width="1.300" stroke-dasharray="5 2"/><path d="M19 19L28.500 28.500" stroke="#333" stroke-width="4"/><circle cx="11.500" cy="11.500" r="10.500" fill="#e8f2f2" stroke="#444c58" stroke-width="1.600"/><path d="M5 10Q7 5 12 5" fill="none" stroke="#fff" stroke-width="3"/></svg>
    <svg class="ml-[11px] w-3 h-[9px]"><use href="#caret"/></svg>
    <svg class="ml-[13px] size-[30px]" viewBox="0 0 30 30"><path d="M12 24H18V27H23V29H7V27H12z" fill="#dde" stroke="#333" stroke-width="1.200"/><rect x="1" y="1" width="28" height="23" rx="1" fill="#f4f5f8" stroke="#333" stroke-width="1.600"/><rect x="4" y="4" width="22" height="16.500" fill="#9bbce0" stroke="#2d5a9c" stroke-width="1.500"/></svg>
    <svg class="ml-[5px] w-3 h-[9px]"><use href="#caret"/></svg>
    <svg class="ml-[15px] size-[30px]" viewBox="0 0 30 30"><rect x="1" y="1" width="28" height="28" rx="1" fill="url(#gDoc)" stroke="#333" stroke-width="1.600"/><path d="M5.500 1V29M9.500 1V29M13.500 1V29M17.500 1V29M21.500 1V29M25.500 1V29M1 5.500H29M1 9.500H29M1 13.500H29M1 17.500H29M1 21.500H29M1 25.500H29" stroke="#6a7180" stroke-width="1"/></svg>
    <svg class="ml-[5px] w-3 h-[9px]"><use href="#caret"/></svg>
  </nav>

  <!-- study materials dialog -->
  <section class="absolute left-[678px] top-[240px] w-[1873px] h-[643px] bg-[#f1f1f1] border border-[#c8c8c8] border-b-2 flex flex-col">
    <div class="h-[48px] border-b-2 border-[#c8c8c8] flex items-center text-[#666]">
      <svg class="ml-[3px] w-[7px] h-[22px]" viewBox="0 0 7 22"><path d="M1 4V18M5 0V22" stroke="#808080" stroke-width="1.500"/></svg>
      <svg class="ml-[13px] size-[18px]" viewBox="0 0 18 18"><circle cx="9" cy="9" r="9" fill="#333"/><path d="M4 9H14" stroke="#eee" stroke-width="2.500"/></svg>
      <span class="ml-[7px] pb-0.5 flex-1 tracking-[0.5px]">STUDY MATERIALS</span>
      <svg class="mr-[8px] w-5 h-3" viewBox="0 0 20 12"><path d="M0 0L10 6L0 12zM10 0L20 6L10 12z" fill="#333"/></svg>
    </div>
    <div class="h-[523px] border-b-2 border-[#c8c8c8] pl-[43px] pr-[75px] pt-[39px] text-[26px] tracking-[-0.55px] text-black font-['Inter',sans-serif]">
      <div class="flex items-center">
        <span class="w-[83px] pt-px tracking-[-0.9px]">View</span>
        <div class="w-[577px] h-10 rounded-[7px] border border-[#c4c4c4] border-b-[#aaa] bg-white flex items-center pl-[16px] overflow-hidden"><span class="flex-1">All Materials</span><svg class="w-[33px] h-10" viewBox="0 0 33 40"><rect width="33" height="40" fill="url(#gB)"/><path d="M10 16L16.500 9L23 16M10 24L16.500 31L23 24" fill="none" stroke="#fff" stroke-width="2.500"/></svg></div>
        <div class="ml-[27px] -mt-px flex-1 h-10 border border-[#b0b0b0] bg-white flex items-center pl-[3px] pt-0.5 text-[#7f7f7f]">Search...</div>
      </div>
      <div class="mt-[34px] h-[273px] border border-[#b0b0b0] border-t-[#888] border-b-2 bg-white">
        <div class="flex h-[38px] pt-1 text-[22px] tracking-[-0.1px] text-center leading-[34px]">
          <div class="w-[151px] border-r-2 border-[#bbb]">Category</div><div class="w-[300px] border-r-2 border-[#bbb]">Name</div><div class="w-[300px] border-r-2 border-[#bbb]">Component</div><div class="w-[600px] border-r-2 border-[#bbb]">Study Materials</div><div class="flex-1 border-r-2 border-[#bbb]">Safety Factor</div>
        </div>
        <div class="mt-[5px] flex h-[60px] border-b-2 border-[#d8d8d8] leading-[57px] tracking-[-0.4px]">
          <div class="w-[150px] border-r border-[#d8d8d8] pl-[11px] tracking-[-0.6px]">Metal</div><div class="w-[300px] border-r border-[#d8d8d8] pl-[11px]">Steel</div><div class="w-[300px] border-r border-[#d8d8d8] pl-[11px] tracking-[-0.25px]">Simulation Model 1:1</div><div class="w-[600px] border-r border-[#d8d8d8] pl-[12px] tracking-[-0.6px]">(Same as Model)</div><div class="flex-1 border-r border-[#d8d8d8] pl-[11px] tracking-[-0.25px]">Yield Strength</div>
        </div>
      </div>
      <div class="mt-[42px] flex items-center">
        <span class="w-[207px] pt-px">Material Library</span>
        <div class="w-[509px] h-10 rounded-[7px] border border-[#c4c4c4] border-b-[#aaa] bg-white flex items-center pl-[16px] overflow-hidden"><span class="flex-1 tracking-[-0.700px]">All Libraries</span><svg class="w-[33px] h-10" viewBox="0 0 33 40"><rect width="33" height="40" fill="url(#gB)"/><path d="M10 16L16.500 9L23 16M10 24L16.500 31L23 24" fill="none" stroke="#fff" stroke-width="2.500"/></svg></div>
        <button class="ml-auto mr-[11px] mt-px w-[225px] h-[41px] rounded-[7px] border border-[#c8c8c8] border-b-[#aaa] bg-white tracking-[-0.300px]">&lt;&lt; Properties</button>
      </div>
    </div>
    <div class="flex-1 flex items-center justify-end gap-[12px] pr-[10px] pb-px text-[#666]">
      <button class="w-[120px] h-[38px] border-2 border-[#b8b8b8] bg-[#e8e8e8] tracking-[0.500px]">OK</button>
      <button class="w-[120px] h-[38px] border-2 border-[#b8b8b8] bg-[#e8e8e8] text-[23px] tracking-[0.800px]">Cancel</button>
    </div>
  </section>
</main>
</body>
</html>
